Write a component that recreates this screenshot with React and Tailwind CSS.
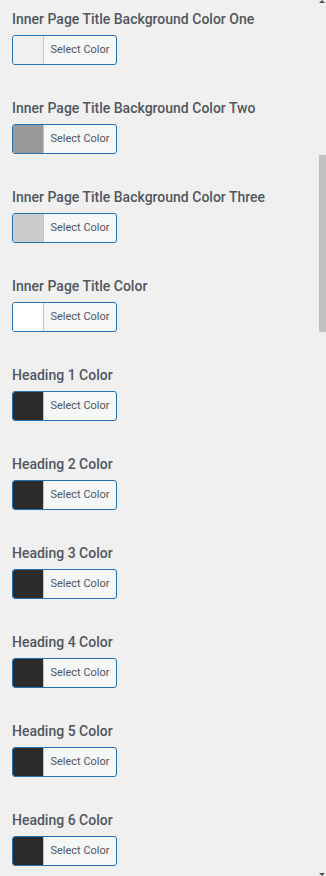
import React from "react";

const items = [
  { label: "Inner Page Title Background Color One", color: "#f0f0f1" },
  { label: "Inner Page Title Background Color Two", color: "#999999" },
  { label: "Inner Page Title Background Color Three", color: "#cccccc" },
  { label: "Inner Page Title Color", color: "#ffffff" },
  { label: "Heading 1 Color", color: "#2b2b2b" },
  { label: "Heading 2 Color", color: "#2b2b2b" },
  { label: "Heading 3 Color", color: "#2b2b2b" },
  { label: "Heading 4 Color", color: "#2b2b2b" },
  { label: "Heading 5 Color", color: "#2b2b2b" },
  { label: "Heading 6 Color", color: "#2b2b2b" },
];

export default function App() {
  return (
    <div
      className="relative w-[326px] h-[876px] overflow-hidden bg-[#f0f0f1]"
      style={{ fontFamily: "Roboto, 'Liberation Sans', sans-serif" }}
    >
      <div className="flex flex-col gap-[33px] pt-[9px] pl-[12px]">
        {items.map((it) => (
          <div key={it.label} className="flex flex-col gap-[6px]">
            <div className="text-[14px] leading-[20px] font-medium text-[#50575e] whitespace-nowrap">
              {it.label}
            </div>
            <div className="flex w-[105px] h-[30px] rounded-[3px] border border-[#2271b1] overflow-hidden bg-[#f6f7f7]">
              <div
                className="w-[31px] h-full border-r border-[#c3c4c7]"
                style={{ backgroundColor: it.color }}
              />
              <div className="flex-1 flex items-center justify-center text-[11px] text-[#50575e]">
                Select Color
              </div>
            </div>
          </div>
        ))}
      </div>
      <div className="absolute right-0 top-[155px] w-[7px] h-[177px] bg-[#c1c1c1]" />
      <div className="absolute right-[1px] top-0 w-0 h-0 border-l-[3px] border-r-[3px] border-b-[3px] border-l-transparent border-r-transparent border-b-[#505050]" />
      <div className="absolute right-[1px] bottom-0 w-0 h-0 border-l-[3px] border-r-[3px] border-t-[3px] border-l-transparent border-r-transparent border-t-[#505050]" />
    </div>
  );
}
